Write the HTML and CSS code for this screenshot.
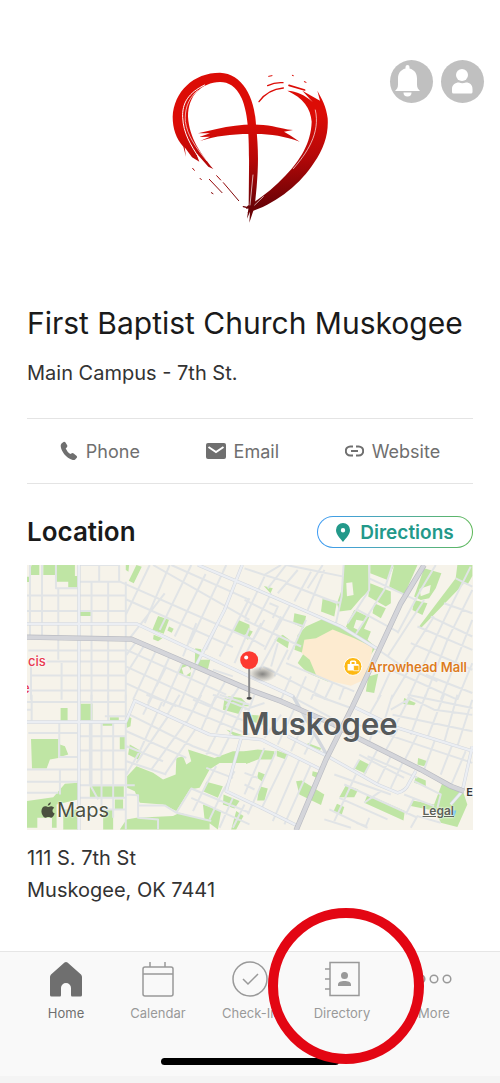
FILE: index.html
```html
<!DOCTYPE html>
<html lang="en">
<head>
<meta charset="utf-8">
<meta name="viewport" content="width=device-width, initial-scale=1">
<title>First Baptist Church Muskogee</title>
<link rel="stylesheet" href="styles.css">
</head>
<body>

<header class="header">
  <svg class="logo" viewBox="0 0 540 510" role="img" aria-label="First Baptist Church Muskogee logo">
    <defs>
      <linearGradient id="brush" gradientUnits="userSpaceOnUse" x1="250" y1="180" x2="270" y2="440">
        <stop offset="0" stop-color="#dc0c06"/>
        <stop offset="0.45" stop-color="#b80808"/>
        <stop offset="1" stop-color="#6a0206"/>
      </linearGradient>
    </defs>
    <g fill="url(#brush)">
      <path d="M78 290L70 260C48 235 38 205 38 170C42 95 100 38 180 38C246 40 284 110 288 195C295 260 296 310 290 380L284 440L268 488L270 455L261 476L266 440L267 330C268 220 264 160 245 115C228 78 205 66 180 66C125 68 84 105 84 170C88 235 122 280 160 327L145 320L108 278L118 305L96 292L74 262Z"/>
      <path d="M382 92C430 114 452 145 455 185C453 250 420 300 378 345C340 385 300 418 262 438L258 447L278 440L262 458C340 436 420 375 462 308C492 266 506 222 503 175C499 140 485 115 472 92L480 122L427 92L458 126C435 105 410 93 382 92Z"/>
      <path d="M114 220L170 207C220 195 270 191 310 195C350 199 380 210 399 210L372 215L390 226L419 245C370 226 320 220 270 222C210 222 170 228 120 243L150 230L118 231L150 220Z"/>
    </g>
    <g fill="none" stroke="url(#brush)" stroke-linecap="round">
      <path stroke-width="4" d="M297 125C315 100 335 87 370 84M323 77Q345 66 369 68"/>
      <path stroke-width="5" d="M387 76L434 90"/>
      <path stroke-width="3" d="M326 49l10-2M397 46l3 1M433 65l5 2M170 347l12 13M190 368L236 422M148 358L186 398M120 355l4 4M154 398l5 3M98 325l5 6"/>
      <path stroke-width="4" d="M250 440l18 4"/>
    </g>
    <g fill="none" stroke="#fff" stroke-linecap="round">
      <path stroke-width="3" d="M134 75C85 98 66 130 68 172C70 220 92 255 118 295"/>
      <path stroke-width="2" d="M112 92C80 120 74 155 76 185C82 225 105 260 140 302"/>
      <path stroke-width="2" d="M466 150C482 220 440 280 400 326"/>
      <path stroke-width="2" d="M279 345L270 435M310 410L284 435"/>
    </g>
  </svg>
  <div class="header-buttons">
    <button class="round-button" aria-label="Notifications">
      <svg viewBox="0 0 43 43" fill="#fff">
        <path d="M17.500 6a2 2 0 0 1 4 0v1.500c5 1.300 7.500 5 7.500 10v6c0 3 1 4.500 3 6.500H7c2-2 3-3.500 3-6.500v-6c0-5 2.500-8.700 7.500-10z" transform="translate(-2 1)"/>
        <path d="M13.500 32.500h8a4 4 0 0 1-8 0z"/>
      </svg>
    </button>
    <button class="round-button" aria-label="Profile">
      <svg viewBox="0 0 43 43" fill="#fff">
        <circle cx="21" cy="15" r="6"/>
        <path d="M11 32v-3c0-4 3-6.500 7-6.500q3 1.500 7 0c4 0 6.500 2.500 6.500 6.500v3q0 1.500-1.500 1.500H12.500Q11 33.500 11 32z"/>
      </svg>
    </button>
  </div>
</header>

<main class="content">
  <h1>First Baptist Church Muskogee</h1>
  <p class="campus">Main Campus - 7th St.</p>

  <div class="actions">
    <a class="action" href="#phone">
      <svg width="18" height="20" viewBox="0 0 18 20">
        <path d="M1.500 2.500L3.500 1q1-.6 1.800.3L7.200 4.300q.5 1-.3 1.900L5.700 7.500q1.500 3.500 4.500 5.500l1.700-.8q1-.4 1.800.3l3 2.500q.8.900.1 1.800l-1.600 1.700q-1 .9-2.500.5C6 17 1 10 .7 5q-.1-1.500.8-2.500z"/>
      </svg>
      Phone
    </a>
    <a class="action" href="#email">
      <svg width="20" height="16" viewBox="0 0 20 16">
        <rect width="20" height="16" rx="2"/>
        <path d="M2.500 4L10 9l7.500-5" fill="none" stroke="#fff" stroke-width="2"/>
      </svg>
      Email
    </a>
    <a class="action" href="#website">
      <svg width="19" height="12" viewBox="0 0 19 12">
        <path d="M8 1.500H5.300a4.400 4.400 0 0 0 0 9H8M11 1.500h2.700a4.400 4.400 0 0 1 0 9H11M6 6h7" fill="none" stroke="#6f6f6f" stroke-width="2"/>
      </svg>
      Website
    </a>
  </div>

  <div class="location-head">
    <h2>Location</h2>
    <button class="directions">
      <svg width="14" height="19" viewBox="0 0 14 19">
        <path fill-rule="evenodd" d="M7 0a7 7 0 0 0-7 7c0 4.500 4 8 7 12 3-4 7-7.500 7-12a7 7 0 0 0-7-7zm0 5a2.200 2.200 0 1 1 0 4.400A2.200 2.200 0 0 1 7 5z"/>
      </svg>
      Directions
    </button>
  </div>

  <div class="map">
    <svg class="map-canvas" viewBox="0 0 1341 798" aria-hidden="true">
      <defs>
        <radialGradient id="shade">
          <stop offset="0" stop-color="#555" stop-opacity="0.7"/>
          <stop offset="1" stop-color="#555" stop-opacity="0"/>
        </radialGradient>
      </defs>
      <rect width="1341" height="798" fill="#f6f3ea"/>

      <!-- parks -->
      <g class="park">
        <path transform="translate(-21 -15)" d="M35 15H58V45H30V30ZM70 15H165V48H172V83H145V65H108V45H70ZM21 50H28V66H21ZM180 155H213V168H180ZM318 15H328L326 35L318 30ZM350 15L366 20L342 70L327 62ZM415 168L448 180L432 222L398 210ZM448 200L462 207L456 219L443 212ZM402 225L428 235L415 244L400 238ZM655 180L690 195V236L642 215ZM485 312L515 322L512 350L475 340ZM527 265L545 268L540 300L572 300L565 328L525 318ZM625 410L665 415L690 440H640Z"/>
        <path transform="translate(654 -15)" d="M298 15H372L376 90L350 115L320 150L285 155L278 130L292 90ZM378 15H450L430 60L378 40ZM450 15H520L480 105L435 80ZM378 70L440 95V130L425 140L372 110ZM235 115L278 125L270 170L230 155ZM540 25L592 40L575 85L555 115L530 120L510 110ZM510 120L550 130L535 165L505 150ZM390 130L425 145L410 175L385 160ZM330 150L375 172L345 240L305 200ZM640 15H685V48L670 75L635 55ZM635 55L665 65L530 205L525 200ZM150 160L185 168L178 205L146 190ZM160 225L185 200L240 175L300 205L355 205L380 215L370 240L395 262L350 330L250 365L190 340L160 310L178 280L150 270ZM90 240L115 225L135 240L130 265ZM372 350L402 342L390 400L365 395ZM58 78L85 85L78 100ZM0 205L25 215L10 240L0 230Z"/>
        <path transform="translate(-21 390)" d="M122 40H143V78H122ZM182 27H218V77H182ZM270 68H297V77H270ZM248 85H279V93H248ZM300 127H315V165H300ZM33 133H115V190L90 195L80 222H36ZM120 150L135 155L145 180L120 187ZM21 320L100 308L135 268L175 265V315L110 330V400H96V370H52V400H21ZM130 345H172V405H130ZM320 65L335 70L332 95L320 100ZM330 150L365 170L355 195L325 180ZM322 245L350 215L400 235L430 255L468 240L470 190L490 185L500 210L515 200L505 165L585 190L640 170H690V205L600 205L570 225L540 280L510 285L470 350L430 330L360 325L345 290L322 280ZM250 345H280V405H250ZM210 275H312V310H210ZM285 315H310V345H285ZM320 375L350 370L460 365L480 355L570 380V405H300ZM560 262L610 275L595 310L550 290ZM612 300L660 320L645 342L610 330ZM550 330L605 350L595 405L555 375ZM650 350L672 365L650 405H635ZM615 10L675 30L658 58L610 45ZM620 105L670 122L645 125Z"/>
        <path transform="translate(654 390)" d="M0 170L40 165L90 170L85 195L40 195L5 208ZM97 168L130 180L125 195L97 185ZM42 232L62 240L52 260L38 250ZM45 275L70 282L60 318L38 318ZM155 260L172 258L200 275L240 300L230 332L165 300ZM205 230L222 235L215 250L203 243ZM345 195L375 210L365 238L330 222ZM305 272L342 285L330 308H285ZM370 300L482 350L478 378L360 325ZM278 328L300 338L292 362L268 350ZM515 245L545 258V275L510 265ZM522 190L550 200L540 215L520 210ZM595 265L655 285L670 330L640 398L590 385L575 350L500 335L505 318L570 330ZM480 10L515 25L510 32L477 28ZM190 145L230 160L228 167L190 152ZM20 60L70 65L70 95L20 80Z"/>
      </g>
      <path fill="#f6f3ea" d="M960 54l18-2 4 38-20 4zM990 165l24 4-16 28-16-8zM1180 72l34-12-4 24-26 10zM465 310l20-8 10 18-22 16z"/>
      <path fill="#fdebd0" d="M834 225L869 220L919 194L984 220L1040 247L1033 282L1014 345L974 363L904 347L869 330L850 285L826 265Z"/>
      <path fill="#6fc8ee" d="M1264 738h27l-7 22z"/>

      <!-- side streets -->
      <g class="street">
        <path transform="translate(-21 -15)" d="M30 15V232M66 15V232M108 15V85H177M115 85V300M215 65V420M265 65V420M238 15V62M298 15V65M21 107H318M21 153H318M25 272H318M80 305H318M33 347H318M21 392H318M33 310V420M125 310V420M177 65H300L690 236M318 65V420M177 15H298M318 118L640 262M400 15L690 180M455 15L690 120M318 165L390 15M375 190L450 15M330 235L435 100M420 210L515 15M465 230L558 42M510 250L620 15M490 290L530 190M560 270L640 90M320 285L350 245M318 345L375 255M340 420L410 270M385 430L450 290M430 440L490 305M478 440L530 320M525 440L575 340M575 440L620 360M620 440L660 380M600 290L690 115M645 310L690 205M320 270L620 405M318 320L580 440M318 370L470 440M410 380L440 320M580 330L640 350"/>
        <path transform="translate(654 -15)" d="M0 25L60 45L110 15M60 45L125 65M70 85L125 15M125 15L200 30L298 50M100 100L160 30M150 125L200 35M190 85L235 15M190 150L240 30M235 115L290 130M298 15L292 110L275 190M375 15V90L310 190M330 230L420 90L445 15M375 55L515 120M340 150L460 215M125 70L280 130M0 175L60 50M30 195L80 100M95 210L140 130M75 130L100 140L85 175M0 120L120 180L180 200M0 180L170 260M130 300L185 180M60 270L110 170M20 250L60 180M0 225L60 260M100 250L80 320M0 290L50 190M45 330L100 230M90 350L130 270M125 310L330 395M55 320L250 420M140 350L110 420M185 350L155 420M225 360L200 420M265 370L240 420M300 380L285 420M410 275L460 310L580 365M460 220L530 90L575 15M430 290L540 120M480 310L570 170M400 420L450 310M440 420L500 320M490 420L600 180L680 20M540 420L610 240L685 90M590 420L685 180M640 420L685 310M560 170L685 230M520 200L685 270M500 250L685 330M545 345L685 400M440 330L640 420M600 130L685 160M635 55L685 80"/>
        <path transform="translate(-21 390)" d="M35 0V82M118 85V187H172M120 222V300M215 0V272M265 0V82M210 85V270L235 315M245 85V340M280 85V370M318 0V405M21 22H318M21 45H35M25 115H172M177 125H318M177 168H318M21 225H318M21 262H177M21 295H115M177 272H345M177 310H320M235 345H320M320 300L355 302V370L415 375V405M355 333H435L470 355L575 380M470 355L515 282L610 322L690 355M255 65H318M330 60L520 155L600 185M320 110L500 190M320 155L430 200M320 200L440 240M320 240L360 170L430 15M350 205L445 65M395 225L500 80M435 240L530 100M370 60L400 0M440 65L480 0M500 85L545 0M545 105L590 0M590 115L640 0M630 120L675 25M380 0L520 50L690 120M520 15L690 85M580 0L690 45M560 180L590 120M600 185L630 125M560 220L640 250M520 350L560 270L590 215M570 375L610 290L645 230M600 400L640 310M640 400L675 330M515 310L690 390M600 0L690 30"/>
        <path transform="translate(654 390)" d="M0 80L30 0M55 0L200 60M130 0L290 85M210 0L320 40M0 45L60 25M100 150L160 20M60 130L110 60M140 170L190 60M180 180L230 80M60 160L0 300M95 170L10 360M130 180L50 345M165 195L85 380M200 210L120 390M0 235L40 250M0 270L30 285M375 60L410 0M420 80L445 0M440 45L500 10L570 45L685 60M445 60L685 110M490 0L685 40M450 100L500 0M500 120L545 0M550 130L600 0M600 145L640 0M640 155L685 15M370 155L400 75M420 175L460 105M480 200L520 120M540 225L575 130M590 240L625 150M620 275L665 170M340 90L685 205M370 185L520 250M345 195L325 230M400 165L360 240M440 185L400 265M475 205L440 280M345 180L480 250M270 240L440 300M335 240L270 380M300 270L520 370M285 310L430 375M255 345L370 400M240 375L320 400M360 325L410 290M335 385L365 395L375 370M480 300L570 335M510 260L590 300L580 340M485 360L510 310M540 235L590 260M500 400L520 365L590 385"/>
      </g>

      <!-- main roads -->
      <path class="road-edge" d="M0 177H329L669 335L800 395L904 575M156 0V798M647 0L594 135L509 300M514 0L669 65L784 115L944 185L1051 251M0 472H297L324 408L549 510L704 525L784 565L884 615M784 515L904 575L1054 660L1114 685Q1139 680 1149 655L1169 620M979 425L1114 490L1341 560M1339 545L1309 680L1274 720M644 520L599 680L704 730L814 785"/>
      <path class="road" d="M0 177H329L669 335L800 395M156 0V798M647 0L594 135L509 300M514 0L669 65L784 115L944 185L1051 251M0 472H297L324 408L549 510L704 525L784 565L884 615M784 515L904 575L1054 660L1114 685Q1139 680 1149 655L1169 620M979 425L1114 490L1341 560M1339 545L1309 680L1274 720M644 520L599 680L704 730L814 785"/>
      <path class="highway-edge" d="M0 217L314 223L669 375L764 410L924 480L994 520L1184 615L1274 665L1314 680M1194 0L1124 115L1054 265L979 425L899 585L809 798"/>
      <path class="highway" d="M0 217L314 223L669 375L764 410L924 480L994 520L1184 615L1274 665L1314 680M1194 0L1124 115L1054 265L979 425L899 585L809 798"/>

      <!-- pin -->
      <ellipse cx="708" cy="328" rx="42" ry="24" fill="url(#shade)"/>
      <path d="M668 310V400" stroke="#8a8a8c" stroke-width="6"/>
      <ellipse cx="668" cy="401" rx="8" ry="4" fill="#444"/>
      <circle cx="668" cy="286" r="27" fill="#fd3a30"/>
      <circle cx="659" cy="278" r="6" fill="#fff"/>

      <!-- mall badge -->
      <circle cx="980" cy="305" r="27" fill="#fdb813" stroke="#fff" stroke-width="3"/>
      <path fill="#fff" d="M964 298h7v-6q0-5 5-5h9q5 0 5 5v6h7v19h-33zM976 298h9v-6h-9z"/>
      <path fill="#fdb813" stroke="#fff" stroke-width="2" d="M982 302h16v16h-16z"/>
    </svg>
    <span class="label hospital">cis</span>
    <span class="label hospital-end">e</span>
    <span class="label mall">Arrowhead Mall</span>
    <span class="label city">Muskogee</span>
    <span class="label east">E</span>
    <span class="label brand">
      <svg width="14" height="17" viewBox="0 0 14 17" fill="#4b5040">
        <path d="M9.800.300c.1 1.800-1.300 3.400-3 3.400C6.600 2 8.200.500 9.800.300z"/>
        <path d="M7 5c.8 0 1.800-.9 3.300-.8 1.200.1 2.200.6 2.900 1.600-2.500 1.600-2.100 4.800.5 5.800-.6 1.700-2 4.200-3.500 4.200-1.100 0-1.500-.7-2.800-.7s-1.700.7-2.800.7C2.600 15.800.4 12.200.4 9.300.4 6.200 2.300 4.300 4.300 4.300 5.500 4.300 6.300 5 7 5z"/>
      </svg>Maps
    </span>
    <a class="label legal" href="#legal">Legal</a>
  </div>

  <address>111 S. 7th St<br>Muskogee, OK 7441</address>
</main>

<nav class="tabs">
  <a class="tab active" href="#home">
    <svg viewBox="0 0 36 36">
      <path fill="#6f6f6f" d="M18 1Q18.800 1 19.500 1.600L33 13.500Q34 14.500 34 16V34Q34 35.500 32.500 35.500H24Q23 35.500 23 34V27A5 5 0 0 0 13 27V34Q13 35.500 12 35.500H3.500Q2 35.500 2 34V16Q2 14.500 3 13.500L16.500 1.600Q17.200 1 18 1z"/>
    </svg>
    Home
  </a>
  <a class="tab" href="#calendar">
    <svg viewBox="0 0 36 36">
      <path d="M5 6H31Q33 6 33 8V33Q33 35 31 35H5Q3 35 3 33V8Q3 6 5 6zM3 13H33M10 6V1M25 6V1"/>
    </svg>
    Calendar
  </a>
  <a class="tab" href="#check-in">
    <svg viewBox="0 0 36 36">
      <circle cx="18" cy="18" r="17"/>
      <path d="M11 18L16 23L26 13"/>
    </svg>
    Check-In
  </a>
  <a class="tab" href="#directory">
    <svg viewBox="0 0 36 36">
      <path d="M6 1.500H35V34.500H6zM1 8H6M1 18H6M1 28H6"/>
      <path class="solid" d="M20.500 11a3.500 3.500 0 1 1 0 7a3.500 3.500 0 1 1 0-7zM14 25V23.500C14 21 17 20 20.500 20S27 21 27 23.500V25z"/>
    </svg>
    Directory
  </a>
  <a class="tab" href="#more">
    <svg viewBox="0 0 36 36">
      <circle cx="5" cy="18" r="3.800"/>
      <circle cx="18" cy="18" r="3.800"/>
      <circle cx="31" cy="18" r="3.800"/>
    </svg>
    More
  </a>
  <div class="home-bar"></div>
  <div class="ring"></div>
</nav>

</body>
</html>
```
FILE: styles.css
```css
* {
  box-sizing: border-box;
}
body {
  margin: 0;
  min-height: 100vh;
  display: flex;
  flex-direction: column;
  background: #fff;
  color: #333;
  font-family: Inter, "Liberation Sans", sans-serif;
  font-size: 20px;
}
a {
  color: inherit;
  text-decoration: none;
}
button {
  font: inherit;
  border: 0;
  padding: 0;
  cursor: pointer;
}

/* header */
.header {
  display: grid;
  grid-template-columns: 1fr 180px 1fr;
  padding: 60px 16px 0;
}
.logo {
  grid-column: 2;
  width: 180px;
  height: 170px;
}
.header-buttons {
  display: flex;
  justify-content: flex-end;
  gap: 8px;
}
.round-button {
  width: 43px;
  height: 43px;
  border-radius: 50%;
  background: #c0c0c0;
}
.round-button svg {
  display: block;
}

/* church details */
.content {
  padding: 0 27px;
}
h1 {
  margin: 73px 0 0;
  font-size: 30px;
  font-weight: 400;
  line-height: 40px;
  color: #1a1a1a;
}
.campus {
  margin: 18px 0 0;
  line-height: 24px;
}
.actions {
  display: flex;
  justify-content: space-around;
  height: 66px;
  margin-top: 33px;
  border-top: 1px solid #e4e4e4;
  border-bottom: 1px solid #e4e4e4;
}
.action {
  display: flex;
  align-items: center;
  gap: 8px;
  font-size: 18px;
  color: #6f6f6f;
}
.action svg {
  fill: #6f6f6f;
}
.location-head {
  display: flex;
  align-items: center;
  justify-content: space-between;
  margin-top: 32px;
}
h2 {
  margin: 0;
  font-size: 26px;
  font-weight: 600;
  line-height: 32px;
  color: #1a1a1a;
}
.directions {
  display: flex;
  align-items: center;
  justify-content: center;
  gap: 10px;
  width: 156px;
  height: 32px;
  border: 1px solid transparent;
  border-radius: 16px;
  background: linear-gradient(#fff, #fff) padding-box, linear-gradient(90deg, #3d9bf5, #5fb95a) border-box;
  font-size: 19px;
  font-weight: 600;
  color: #23998a;
}
.directions svg {
  fill: #23998a;
}

/* map */
.map {
  position: relative;
  margin-top: 17px;
  overflow: hidden;
}
.map-canvas {
  display: block;
  width: 100%;
}
.park {
  fill: #bfe5a4;
}
.street,
.road,
.road-edge,
.highway,
.highway-edge {
  fill: none;
  stroke-linejoin: round;
}
.street {
  stroke: #e1e4e6;
  stroke-width: 6;
}
.road-edge {
  stroke: #d3d7dd;
  stroke-width: 10;
}
.road {
  stroke: #ebeef3;
  stroke-width: 7;
}
.highway-edge {
  stroke: #b9bbc2;
  stroke-width: 16;
}
.highway {
  stroke: #d4d5da;
  stroke-width: 12;
}
.label {
  position: absolute;
  line-height: 20px;
  white-space: nowrap;
  text-shadow: 0 0 2px #fff, 0 0 2px #fff;
}
.hospital,
.hospital-end {
  left: 1px;
  top: 86px;
  font-size: 13px;
  font-weight: 500;
  color: #e8384f;
}
.hospital-end {
  left: -5px;
  top: 113px;
}
.mall {
  right: 6px;
  top: 92px;
  font-size: 13px;
  font-weight: 600;
  color: #dc7c1e;
}
.city {
  left: 48%;
  top: 139px;
  font-size: 31px;
  font-weight: 600;
  line-height: 40px;
  color: #55595a;
}
.east {
  right: 0;
  top: 217px;
  font-size: 11px;
  font-weight: 600;
}
.brand {
  left: 14px;
  bottom: 10px;
  display: flex;
  align-items: center;
  gap: 2px;
  font-size: 20px;
  color: #4b5040;
}
.legal {
  right: 19px;
  bottom: 9px;
  font-size: 12px;
  font-weight: 600;
  text-decoration: underline;
  color: #5d6158;
}
address {
  margin: 12px 0 31px;
  font-style: normal;
  line-height: 32px;
}

/* bottom tabs */
.tabs {
  position: relative;
  display: grid;
  grid-template-columns: repeat(5, 1fr);
  align-content: start;
  height: 132px;
  margin-top: auto;
  padding: 9px 20px 0;
  border-top: 1px solid #e6e6e6;
  border-bottom: 7px solid #f4f4f4;
  background: #f9f9f9;
}
.tab {
  display: flex;
  flex-direction: column;
  align-items: center;
  gap: 8px;
  font-size: 13px;
  line-height: 16px;
  color: #999;
}
.tab svg {
  width: 36px;
  height: 36px;
  fill: none;
  stroke: #999;
  stroke-width: 1.500;
}
.tab .solid {
  fill: #999;
  stroke: none;
}
.active {
  color: #6f6f6f;
}
.active svg {
  stroke: none;
}
.home-bar {
  grid-column: 1 / -1;
  justify-self: center;
  width: 178px;
  height: 7px;
  margin-top: 37px;
  border-radius: 4px;
  background: #000;
}
/* highlight over the directory tab */
.ring {
  position: absolute;
  left: calc(50% + 18px);
  top: -44px;
  width: 156px;
  height: 156px;
  border: 10px solid #e30613;
  border-radius: 50%;
  pointer-events: none;
}
```
